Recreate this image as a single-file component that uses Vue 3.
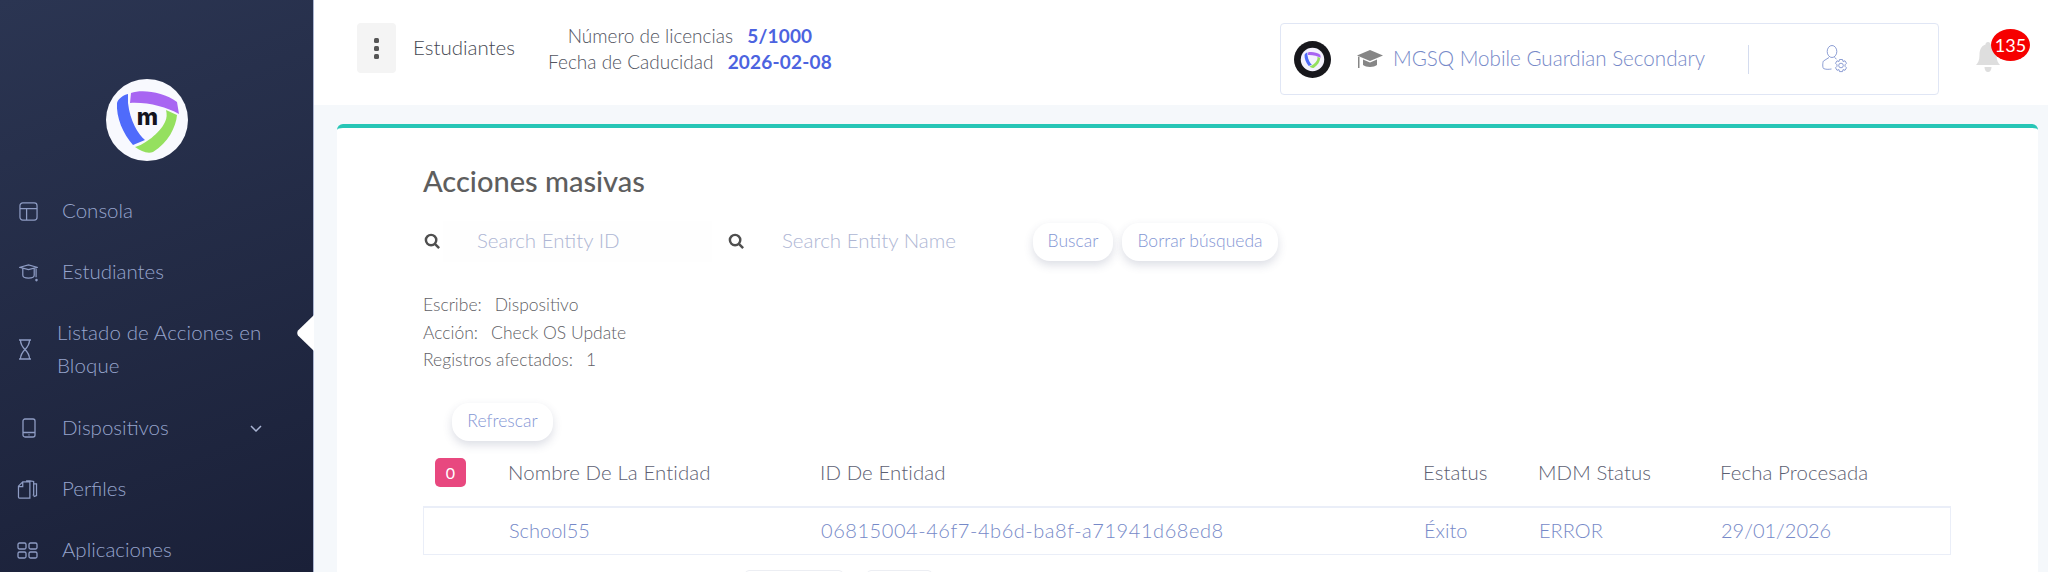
<script setup>
const logoPaths = [
  { d: 'M25 14 C36 10 58 13 71 23 L73 35 C60 28 42 23 24 24 Z', c: '#a865f2' },
  { d: 'M22 15 C17 16 12 20 11 24 C10 38 17 55 27 66 L39 61 C32 55 24 42 22 24 Z', c: '#4f6bfb' },
  { d: 'M60 31 L71 36 C70 48 62 64 47 73 C41 75 35 72 29 68 C38 66 54 54 59 43 C61 39 61 35 60 31 Z', c: '#95e05f' },
]
const org = 'MGSQ Mobile Guardian Secondary'
const columns = ['Nombre De La Entidad', 'ID De Entidad', 'Estatus', 'MDM Status', 'Fecha Procesada']
const cells = ['School55', '06815004-46f7-4b6d-ba8f-a71941d68ed8', 'Éxito', 'ERROR', '29/01/2026']
const info = [
  ['Escribe:', 'Dispositivo'],
  ['Acción:', 'Check OS Update'],
  ['Registros afectados:', '1'],
]
</script>

<template>
  <div class="page">
    <aside class="sidebar">
      <svg class="logo" viewBox="0 0 82 82" aria-label="logo">
        <circle cx="41" cy="41" r="41" fill="#f8f9fe" />
        <path v-for="p in logoPaths" :key="p.c" :d="p.d" :fill="p.c" />
        <text x="41.500" y="46" text-anchor="middle" class="logo-m">m</text>
      </svg>
      <nav class="menu">
        <a class="item">
          <svg class="ico" viewBox="0 0 20 20"><rect x="1" y="1" width="18" height="18" rx="3" /><path d="M1 7h18M8 7v12" /></svg>
          <span>Consola</span>
        </a>
        <a class="item">
          <svg class="ico" viewBox="0 0 20 20"><path d="M1 4.500 10 2l9 2.500-9 2.500zM4 6v7c0 2 3 3 6 3 3 0 6-1 6-3V6M18 6v9" /><circle cx="18.400" cy="18" r=".7" /></svg>
          <span>Estudiantes</span>
        </a>
        <a class="item item-active">
          <svg class="ico hourglass" viewBox="0 0 14 21"><path d="M1 1h12M1 20h12M2.500 1c0 5 2 7 4.500 9.500C4.500 13 2.500 15 2.500 20M11.500 1c0 5-2 7-4.500 9.500 2.500 2.500 4.500 4.500 4.500 9.500" /></svg>
          <span>Listado de Acciones en Bloque</span>
          <svg class="notch" viewBox="0 0 17 36"><path d="M17 0 L1 15.500 Q-.5 18 1 20.500 L17 36 Z" fill="#fff" /></svg>
        </a>
        <a class="item">
          <svg class="ico tablet" viewBox="0 0 14 20"><rect x="1" y="1" width="12" height="18" rx="2" /><path d="M1 14.500h12M6.500 16.800h1" /></svg>
          <span>Dispositivos</span>
          <svg class="chev" viewBox="0 0 12 7"><path d="M1 1l5 5 5-5" /></svg>
        </a>
        <a class="item">
          <svg class="ico wide" viewBox="0 0 21 20"><path d="M1 6.500 5.500 2H13v17H2a1 1 0 0 1-1-1zM5.500 2v5H1M9 1h4l4 .5v4M17 1.500V16h-1M17 4h3v12.500l-3 1" /></svg>
          <span>Perfiles</span>
        </a>
        <a class="item">
          <svg class="ico wide" viewBox="0 0 21 17"><rect x="1" y="1" width="8" height="6" rx="1.500" /><rect x="12" y="1" width="8" height="6" rx="1.500" /><rect x="1" y="10" width="8" height="6" rx="1.500" /><rect x="12" y="10" width="8" height="6" rx="1.500" /></svg>
          <span>Aplicaciones</span>
        </a>
      </nav>
    </aside>

    <main class="main">
      <header class="topbar">
        <button class="kebab" type="button" aria-label="menu"><i></i><i></i><i></i></button>
        <span class="crumb">Estudiantes</span>
        <div class="license">
          <div>Número de licencias <b>5/1000</b></div>
          <div>Fecha de Caducidad <b>2026-02-08</b></div>
        </div>
        <div class="org">
          <svg class="org-logo" viewBox="0 0 82 82">
            <circle cx="41" cy="41" r="41" fill="#17171c" />
            <circle cx="41" cy="41" r="26" fill="#f4f2fe" />
            <g transform="translate(17 17) scale(.58)">
              <path v-for="p in logoPaths" :key="p.c" :d="p.d" :fill="p.c" />
            </g>
          </svg>
          <svg class="cap" viewBox="0 0 26 18"><path d="M13 0 26 5.500 13 11 0 5.500z" fill="#868686" /><path d="M6 9.500 13 12.500l7-3V15c-3 2.500-11 2.500-14 0zM2.500 7v11h-1.500V6.500z" fill="#868686" /></svg>
          <span class="org-name">{{ org }}</span>
          <span class="divider"></span>
          <svg class="user" viewBox="0 0 26 28">
            <ellipse cx="10" cy="6.500" rx="4.800" ry="6" />
            <path d="M7 12.500 1.500 16c-1 1-1 7 0 7.500 2 1 5 1 8 .5M12.500 12.500l2 1.500" />
            <circle cx="19" cy="20.500" r="2.300" />
            <path d="M17.500 14.500h3l.5 2 2-.7 1.500 2.500-1.500 1.500v1.500l1.500 1.500-1.500 2.500-2-.7-.5 2h-3l-.5-2-2 .7-1.500-2.500 1.500-1.500v-1.500l-1.500-1.500 1.500-2.500 2 .7z" />
          </svg>
        </div>
        <div class="bell">
          <svg viewBox="0 0 24 30"><path d="M12 0c1.500 0 2.500 1 2.500 2.500C19 4 20.500 8 20.500 13c0 5 1.500 8 3.500 10H0c2-2 3.500-5 3.500-10 0-5 1.500-9 6-10.500C9.500 1 10.500 0 12 0z" fill="#dedede" /><path d="M8.500 25h7c0 3-1.500 5-3.500 5s-3.500-2-3.500-5z" fill="#dedede" /></svg>
          <span class="count">135</span>
        </div>
      </header>

      <div class="content">
        <section class="card">
          <h1>Acciones masivas</h1>
          <div class="search">
            <svg class="mag" viewBox="0 0 18 18"><circle cx="7.500" cy="7.500" r="5.500" /><path d="M11.500 11.500 16 16" /></svg>
            <div class="field f1">Search Entity ID</div>
            <svg class="mag m2" viewBox="0 0 18 18"><circle cx="7.500" cy="7.500" r="5.500" /><path d="M11.500 11.500 16 16" /></svg>
            <div class="field f2">Search Entity Name</div>
            <button class="pill b1" type="button">Buscar</button>
            <button class="pill b2" type="button">Borrar búsqueda</button>
          </div>
          <div class="info">
            <div v-for="row in info" :key="row[0]"><span>{{ row[0] }}</span><span class="val">{{ row[1] }}</span></div>
          </div>
          <button class="pill refresh" type="button">Refrescar</button>
          <div class="table">
            <div class="tr th">
              <div class="zero"><span>0</span></div>
              <div v-for="c in columns" :key="c">{{ c }}</div>
            </div>
            <div class="tr td">
              <div></div>
              <div v-for="c in cells" :key="c">{{ c }}</div>
            </div>
          </div>
          <div class="pager"><span class="p1"></span><span class="p2"></span></div>
        </section>
      </div>
    </main>
  </div>
</template>

<style>
html, body { margin: 0; background: #f5f8fb; }
</style>

<style scoped>
.page {
  display: flex;
  width: 2048px;
  height: 572px;
  overflow: hidden;
  font-family: "Lato", "Noto Sans", sans-serif;
  font-weight: 300;
}
.sidebar {
  width: 313px;
  flex: none;
  padding-top: 79px;
  background: linear-gradient(160deg, #2b3552 0%, #1a2038 100%);
  border-right: 1px solid #aab4cf;
}
.logo { display: block; width: 82px; height: 82px; margin-left: 106px; }
.logo-m { font: 800 23px "Inter", sans-serif; fill: #14141f; }
.menu { margin-top: 20px; color: #97a5cd; font-size: 20.500px; }
.item {
  position: relative;
  display: flex;
  align-items: center;
  min-height: 61px;
  padding-left: 19px;
  box-sizing: border-box;
}
.item > span { margin: 0 0 3px 24px; }
.ico { width: 19px; height: 19px; flex: none; fill: none; stroke: #8e9cc4; stroke-width: 1.300; }
.ico.hourglass { width: 14px; height: 21px; margin-left: -1px; }
.ico.tablet { width: 14px; height: 20px; margin-left: 3px; margin-right: 2px; }
.ico.wide { width: 21px; margin-left: -2px; }
.item-active { padding: 13px 0 14.500px 19px; line-height: 33px; }
.item-active > span { width: 235px; margin: 0 0 1px 25px; letter-spacing: .1px; }
.notch {
  position: absolute;
  right: -1px;
  top: 12px;
  width: 17px;
  height: 36px;
}
.chev { width: 12px; height: 7px; margin-left: 81px; fill: none; stroke: #a9b4d3; stroke-width: 1.500; }

.main { flex: 1; min-width: 0; display: flex; flex-direction: column; }
.topbar {
  height: 105px;
  flex: none;
  display: flex;
  align-items: flex-start;
  padding: 23px 0 0 43px;
  box-sizing: border-box;
  background: #fff;
}
.kebab {
  width: 39px;
  height: 50px;
  padding: 0;
  border: 0;
  border-radius: 4px;
  background: #f4f4f4;
  display: flex;
  flex-direction: column;
  align-items: center;
  justify-content: center;
  gap: 3px;
}
.kebab i { width: 5px; height: 5px; border-radius: 1.500px; background: #555; }
.crumb { margin: 12px 0 0 17px; font-size: 20.500px; line-height: 25px; color: #454852; }
.license {
  width: 290px;
  margin: 0 0 0 30px;
  text-align: center;
  font-size: 19px;
  line-height: 26px;
  color: #52555f;
}
.license b { margin-left: 9px; font-weight: 700; color: #4c63e0; letter-spacing: .2px; }
.org {
  margin-left: auto;
  width: 659px;
  height: 72px;
  box-sizing: border-box;
  border: 1.500px solid #e0e6f5;
  border-radius: 4px;
  display: flex;
  align-items: center;
  padding-left: 13px;
}
.org-logo { width: 37px; height: 37px; flex: none; }
.cap { width: 26px; height: 18px; margin-left: 26px; flex: none; }
.org-name { margin: 0 0 3px 10px; width: 355px; font-size: 20.600px; color: #7689c8; white-space: nowrap; }
.divider { width: 1px; height: 29px; background: #d4dcef; flex: none; }
.user { width: 26px; height: 28px; margin-left: 73px; fill: none; stroke: #8093cf; stroke-width: .9; flex: none; }
.bell { position: relative; width: 24px; height: 30px; margin: 19px 48px 0 37px; }
.bell svg { display: block; width: 24px; height: 30px; }
.count {
  position: absolute;
  left: 15px;
  top: -13px;
  width: 39px;
  height: 32px;
  border-radius: 50%;
  background: #f60000;
  color: #fff;
  font-size: 18px;
  font-weight: 400;
  line-height: 32px;
  text-align: center;
}

.content { flex: 1; padding: 19px 10px 0 23px; background: #f5f8fb; min-height: 0; }
.card {
  height: 100%;
  box-sizing: border-box;
  background: #fff;
  border-top: 4px solid #27c6b6;
  border-radius: 6px 6px 0 0;
  padding: 33px 86px 0 86px;
}
h1 { margin: 0; font-size: 29px; line-height: 40px; font-weight: 500; color: #5e5e5e; }
.search { display: flex; align-items: center; height: 41px; margin-top: 20px; }
.mag { width: 17px; height: 17px; margin-left: 1px; fill: none; stroke: #4f4f4f; stroke-width: 2.600; flex: none; }
.field {
  height: 41px;
  line-height: 39px;
  background: #fefefe;
  color: #aeb6d4;
  font-size: 20.500px;
  box-sizing: border-box;
  white-space: nowrap;
}
.f1 { width: 269px; margin-left: 2px; padding-left: 34px; }
.m2 { margin-left: 16px; }
.f2 { width: 270px; margin-left: 5px; padding-left: 32px; margin-right: 18px; background: #fff; }
.pill {
  height: 38px;
  padding: 0 0 2px;
  border: 0;
  border-radius: 17px;
  background: #fff;
  color: #8496d4;
  font: inherit;
  font-size: 17.500px;
  box-shadow: 0 4px 10px rgba(60, 70, 110, .18);
}
.b1 { width: 80px; margin-left: -5px; }
.b2 { width: 156px; margin-left: 9px; }
.info { margin-top: 29px; font-size: 17.500px; line-height: 27.500px; color: #5f5f66; }
.val { margin-left: 13px; }
.refresh { display: block; width: 101px; margin: 29px 0 0 29px; }
.table { width: 1528px; }
.tr { display: grid; grid-template-columns: 85px 312px 603px 115px 182px 231px; align-items: center; }
.th { height: 65px; padding-bottom: 2px; box-sizing: border-box; font-size: 20.400px; letter-spacing: .1px; color: #5c6072; }
.zero span {
  display: block;
  width: 31px;
  height: 29px;
  margin-left: 12px;
  margin-top: 1px;
  border-radius: 5px;
  background: #e8487f;
  color: #fff;
  font-size: 16px;
  font-weight: 400;
  line-height: 29px;
  text-align: center;
}
.td {
  height: 49px;
  box-sizing: border-box;
  border: 1px solid #eaeef8;
  border-top: 2px solid #eaeef8;
  padding-bottom: 2px;
  font-size: 20px;
  color: #7689c8;
}
.td > div:nth-child(3) { letter-spacing: .55px; }
.pager { display: flex; margin: 15px 0 0 322px; }
.pager span { display: block; height: 20px; box-sizing: border-box; border: 1px solid #eceef3; border-radius: 4px; }
.p1 { width: 98px; }
.p2 { width: 65px; margin-left: 24px; }
</style>
